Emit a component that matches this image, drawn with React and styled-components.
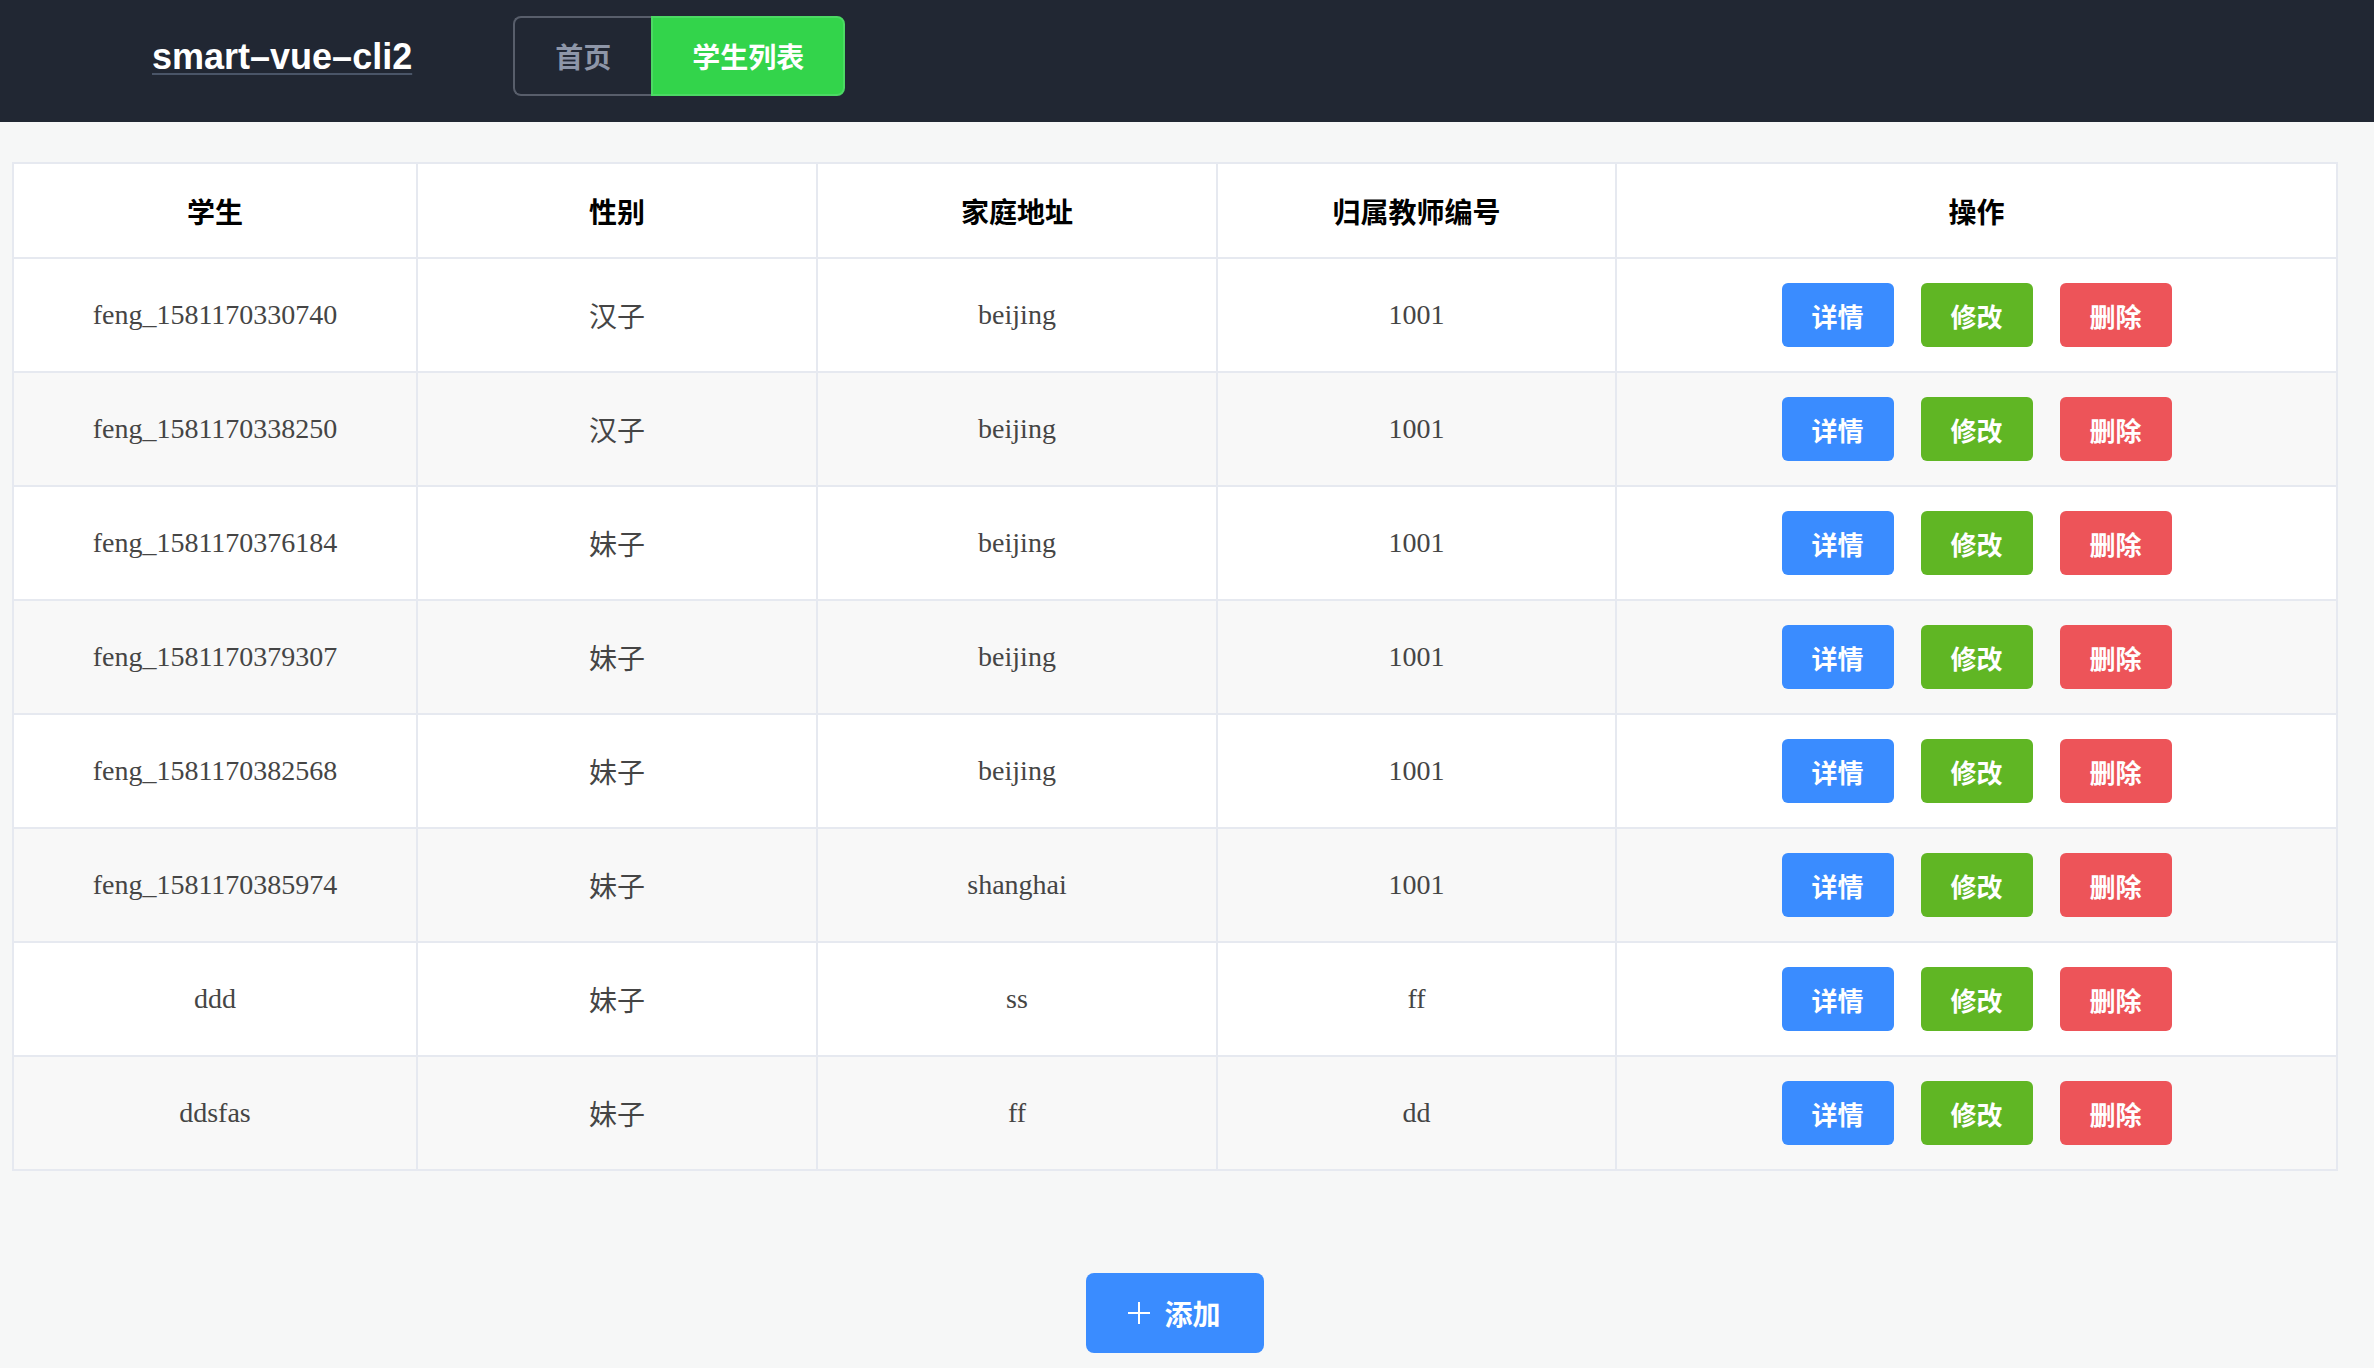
import styled, { createGlobalStyle } from 'styled-components'

const GlobalStyle = createGlobalStyle`
  body {
    margin: 0;
    background: #f6f7f7;
    font-family: "Liberation Serif", "Noto Sans CJK SC", serif;
  }
`

const TopBar = styled.header`
  height: 122px;
  background: #212733;
  display: flex;
  align-items: center;
  padding-left: 152px;
`

const Logo = styled.a`
  font-family: "Liberation Sans", "Noto Sans CJK SC", sans-serif;
  font-size: 36px;
  font-weight: 700;
  color: #fff;
  text-decoration: underline;
  text-decoration-color: #4a5568;
  text-decoration-thickness: 2px;
  text-underline-offset: 4px;
  margin-top: -8px;
`

const Nav = styled.nav`
  display: flex;
  height: 80px;
  margin-left: 101px;
  margin-top: -10px;
`

const Tab = styled.a`
  box-sizing: border-box;
  display: flex;
  align-items: center;
  justify-content: center;
  width: ${p => (p.active ? '194px' : '138px')};
  font-family: "Noto Sans CJK SC", sans-serif;
  font-size: 28px;
  font-weight: 700;
  color: ${p => (p.active ? '#fff' : '#8e96a8')};
  background: ${p => (p.active ? '#33d44b' : 'transparent')};
  border: 2px solid ${p => (p.active ? '#4cd964' : '#585e6b')};
  border-right-width: ${p => (p.active ? '2px' : '0')};
  border-radius: ${p => (p.active ? '0 8px 8px 0' : '8px 0 0 8px')};
`

const Main = styled.main`
  padding: 40px 37px 16px 12px;
`

const Table = styled.table`
  width: 100%;
  border-collapse: collapse;
  table-layout: fixed;
  border: 2px solid #e6e9f0;
`

const HeadCell = styled.th`
  height: 93px;
  padding: 0;
  border: 2px solid #e6e9f0;
  background: #fff;
  color: #000;
  font-size: 28px;
  font-weight: 700;
  text-align: center;
`

const Row = styled.tr`
  background: ${p => (p.striped ? '#f8f8f8' : '#fff')};
`

const Cell = styled.td`
  height: 112px;
  padding: 0;
  border: 2px solid #e6e9f0;
  color: #454545;
  font-size: 28px;
  text-align: center;
`

const Actions = styled.div`
  display: flex;
  justify-content: center;
  gap: 27px;
`

const ActionButton = styled.button`
  width: 112px;
  height: 64px;
  border: none;
  border-radius: 6px;
  background: ${p => p.color};
  color: #fff;
  font-family: "Noto Sans CJK SC", sans-serif;
  font-size: 26px;
  font-weight: 700;
  padding: 0;
  cursor: pointer;
`

const AddRow = styled.div`
  display: flex;
  justify-content: center;
  margin-top: 102px;
`

const AddButton = styled.button`
  display: flex;
  align-items: center;
  justify-content: center;
  gap: 14px;
  width: 178px;
  height: 80px;
  border: none;
  border-radius: 8px;
  background: #3a8cff;
  color: #fff;
  font-family: "Noto Sans CJK SC", sans-serif;
  font-size: 28px;
  font-weight: 700;
  padding: 0;
`

const students = [
  ['feng_1581170330740', '汉子', 'beijing', '1001'],
  ['feng_1581170338250', '汉子', 'beijing', '1001'],
  ['feng_1581170376184', '妹子', 'beijing', '1001'],
  ['feng_1581170379307', '妹子', 'beijing', '1001'],
  ['feng_1581170382568', '妹子', 'beijing', '1001'],
  ['feng_1581170385974', '妹子', 'shanghai', '1001'],
  ['ddd', '妹子', 'ss', 'ff'],
  ['ddsfas', '妹子', 'ff', 'dd'],
]

const columns = ['学生', '性别', '家庭地址', '归属教师编号', '操作']
const widths = [404, 400, 400, 399, 721]

const App = () => {
  return (
    <>
      <GlobalStyle />
      <TopBar>
        <Logo>smart–vue–cli2</Logo>
        <Nav>
          <Tab>首页</Tab>
          <Tab active>学生列表</Tab>
        </Nav>
      </TopBar>
      <Main>
        <Table>
          <colgroup>
            {widths.map((w, i) => (
              <col key={i} style={{ width: w }} />
            ))}
          </colgroup>
          <thead>
            <tr>
              {columns.map(c => (
                <HeadCell key={c}>{c}</HeadCell>
              ))}
            </tr>
          </thead>
          <tbody>
            {students.map((s, i) => (
              <Row key={i} striped={i % 2 === 1}>
                {s.map((v, j) => (
                  <Cell key={j}>{v}</Cell>
                ))}
                <Cell>
                  <Actions>
                    <ActionButton color="#3a8cff">详情</ActionButton>
                    <ActionButton color="#60b624">修改</ActionButton>
                    <ActionButton color="#ed5459">删除</ActionButton>
                  </Actions>
                </Cell>
              </Row>
            ))}
          </tbody>
        </Table>
        <AddRow>
          <AddButton>
            <svg width="22" height="22" viewBox="0 0 22 22">
              <path d="M11 0v22M0 11h22" stroke="#fff" strokeWidth="2" />
            </svg>
            添加
          </AddButton>
        </AddRow>
      </Main>
    </>
  )
}

export default App
